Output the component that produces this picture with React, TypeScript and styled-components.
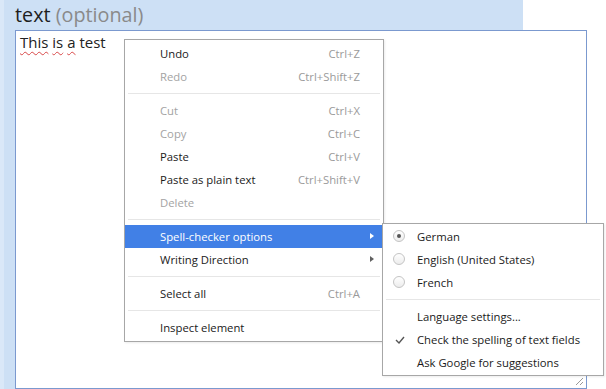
import React from "react";
import styled, { createGlobalStyle } from "styled-components";

const Global = createGlobalStyle`
  html, body { margin: 0; padding: 0; background: #ffffff; }
  body { font-family: "Open Sans", "Liberation Sans", sans-serif; }
`;

const Page = styled.div`
  position: relative;
  width: 606px;
  height: 389px;
  overflow: hidden;
  background: #ffffff;
`;

const Panel = styled.div`
  width: 523px;
  height: 389px;
  box-sizing: border-box;
  background: #cde0f5;
  border-left: 4px solid #dae8f8;
  padding-left: 11px;
  display: flex;
  flex-direction: column;
`;

const Title = styled.div`
  height: 30px;
  box-sizing: border-box;
  padding-top: 3px;
  font-family: "Open Sans", sans-serif;
  font-size: 19.8px;
  line-height: 24px;
  color: #1e1e1e;
  white-space: nowrap;
`;

const Optional = styled.span`
  color: #8a8a8a;
`;

const TextArea = styled.div`
  position: relative;
  width: 572px;
  height: 359px;
  box-sizing: border-box;
  border: 1px solid #7b99cf;
  background: #ffffff;
  padding: 2px 4px;
  font-family: "Open Sans", sans-serif;
  font-size: 15px;
  line-height: 18px;
  color: #222;
`;

const Misspelled = styled.span`
  text-decoration: underline wavy #d84848;
  text-decoration-thickness: 1px;
  text-underline-offset: 3px;
`;

const Grip = styled.svg`
  position: absolute;
  right: 2px;
  bottom: 2px;
`;

const Menu = styled.div<{ $left: number; $top: number; $width: number; $pad: number }>`
  position: absolute;
  left: ${(p) => p.$left}px;
  top: ${(p) => p.$top}px;
  width: ${(p) => p.$width}px;
  box-sizing: border-box;
  background: #ffffff;
  border: 1px solid #a7a7a7;
  padding: ${(p) => p.$pad}px 0;
  box-shadow: 1px 1px 2px rgba(0, 0, 0, 0.08);
  font-family: "Open Sans", sans-serif;
  font-size: 11.3px;
`;

const Item = styled.div<{ $disabled?: boolean; $active?: boolean; $indent: number; $rpad: number }>`
  position: relative;
  height: 23px;
  display: flex;
  align-items: center;
  justify-content: space-between;
  padding-left: ${(p) => p.$indent}px;
  padding-right: ${(p) => p.$rpad}px;
  background: ${(p) => (p.$active ? "#4180e6" : "transparent")};
  color: ${(p) => (p.$active ? "#ffffff" : p.$disabled ? "#a3a3a3" : "#1a1a1a")};
  white-space: nowrap;
`;

const Shortcut = styled.span`
  color: #9a9a9a;
`;

const Arrow = styled.span<{ $active?: boolean }>`
  position: absolute;
  right: 9px;
  top: 8px;
  width: 0;
  height: 0;
  border-top: 3.5px solid transparent;
  border-bottom: 3.5px solid transparent;
  border-left: 4px solid ${(p) => (p.$active ? "#ffffff" : "#606060")};
`;

const Separator = styled.div`
  height: 11px;
  display: flex;
  align-items: center;
  padding: 0 3px;
  &::after {
    content: "";
    flex: 1;
    height: 1px;
    background: #e6e6e6;
  }
`;

const Radio = styled.span<{ $checked?: boolean }>`
  position: absolute;
  left: 10px;
  top: 5px;
  width: 12px;
  height: 12px;
  box-sizing: border-box;
  border-radius: 50%;
  border: 1px solid #c4c4c4;
  background: linear-gradient(#ffffff, #ececec);
  &::after {
    content: "";
    display: ${(p) => (p.$checked ? "block" : "none")};
    position: absolute;
    left: 3px;
    top: 3px;
    width: 4px;
    height: 4px;
    border-radius: 50%;
    background: #555555;
  }
`;

const Check = styled.svg`
  position: absolute;
  left: 12px;
  top: 8px;
`;

type Entry =
  | { sep: true }
  | { sep?: false; label: string; shortcut?: string; disabled?: boolean; active?: boolean; sub?: boolean };

const mainItems: Entry[] = [
  { label: "Undo", shortcut: "Ctrl+Z" },
  { label: "Redo", shortcut: "Ctrl+Shift+Z", disabled: true },
  { sep: true },
  { label: "Cut", shortcut: "Ctrl+X", disabled: true },
  { label: "Copy", shortcut: "Ctrl+C", disabled: true },
  { label: "Paste", shortcut: "Ctrl+V" },
  { label: "Paste as plain text", shortcut: "Ctrl+Shift+V" },
  { label: "Delete", disabled: true },
  { sep: true },
  { label: "Spell-checker options", active: true, sub: true },
  { label: "Writing Direction", sub: true },
  { sep: true },
  { label: "Select all", shortcut: "Ctrl+A" },
  { sep: true },
  { label: "Inspect element" },
];

export default function App() {
  return (
    <Page>
      <Global />
      <Panel>
        <Title>
          text <Optional>(optional)</Optional>
        </Title>
        <TextArea>
          <Misspelled>This</Misspelled> <Misspelled>is</Misspelled> <Misspelled>a</Misspelled> test
          <Grip width="9" height="9" viewBox="0 0 9 9">
            <path d="M8 1 L1 8 M8 5 L5 8" stroke="#9a9a9a" strokeWidth="1" fill="none" />
          </Grip>
        </TextArea>
      </Panel>

      <Menu $left={124} $top={39} $width={260} $pad={2}>
        {mainItems.map((it, i) =>
          it.sep ? (
            <Separator key={i} />
          ) : (
            <Item key={i} $indent={35} $rpad={23} $disabled={it.disabled} $active={it.active}>
              <span>{it.label}</span>
              {it.shortcut && <Shortcut>{it.shortcut}</Shortcut>}
              {it.sub && <Arrow $active={it.active} />}
            </Item>
          )
        )}
      </Menu>

      <Menu $left={382} $top={223} $width={222} $pad={1}>
        <Item $indent={34} $rpad={10}>
          <Radio $checked />
          <span>German</span>
        </Item>
        <Item $indent={34} $rpad={10}>
          <Radio />
          <span>English (United States)</span>
        </Item>
        <Item $indent={34} $rpad={10}>
          <Radio />
          <span>French</span>
        </Item>
        <Separator />
        <Item $indent={34} $rpad={10}>
          <span>Language settings...</span>
        </Item>
        <Item $indent={34} $rpad={10}>
          <Check width="10" height="8" viewBox="0 0 10 8">
            <path d="M1 4 L4 7 L9 1" stroke="#555" strokeWidth="1.4" fill="none" />
          </Check>
          <span>Check the spelling of text fields</span>
        </Item>
        <Item $indent={34} $rpad={10}>
          <span>Ask Google for suggestions</span>
        </Item>
      </Menu>
    </Page>
  );
}
